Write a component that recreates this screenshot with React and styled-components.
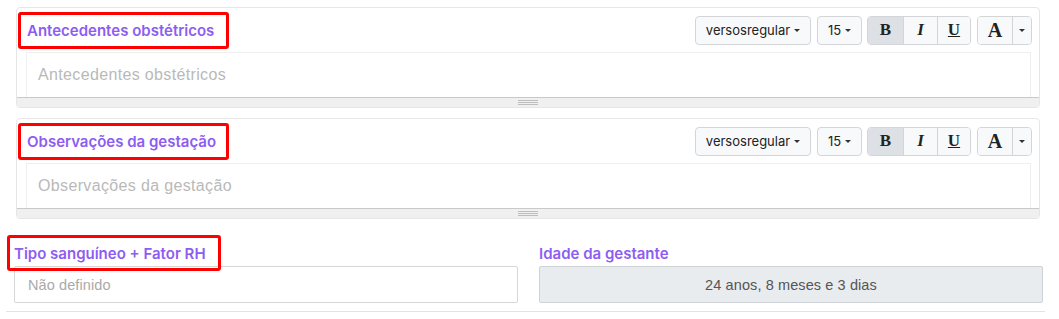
import styled, { createGlobalStyle } from 'styled-components';

const GlobalStyle = createGlobalStyle`
  body {
    margin: 0;
    background: #fff;
    font-family: Inter, "Liberation Sans", Arial, sans-serif;
  }
`;

function Editor({ label }) {
  return (
    <EditorBox>
      <Toolbar>
        <Highlight $on $w={211} $h={37} $pl={6}>
          <Label>{label}</Label>
        </Highlight>
        <Tools>
          <ToolButton $w={116}>
            versosregular <Caret />
          </ToolButton>
          <ToolButton $w={45}>
            15 <Caret />
          </ToolButton>
          <Group>
            <Segment $w={35} $active>
              <Glyph>B</Glyph>
            </Segment>
            <Segment $w={34}>
              <Glyph $italic>I</Glyph>
            </Segment>
            <Segment $w={33}>
              <Glyph $underline>U</Glyph>
            </Segment>
          </Group>
          <Group>
            <Segment $w={34}>
              <Glyph $big>A</Glyph>
            </Segment>
            <Segment $w={19}>
              <Caret />
            </Segment>
          </Group>
        </Tools>
      </Toolbar>
      <Content>
        <Placeholder>{label}</Placeholder>
      </Content>
      <StatusBar>
        <Grip />
      </StatusBar>
    </EditorBox>
  );
}

export default function App() {
  return (
    <>
      <GlobalStyle />
      <Page>
        <Editor label="Antecedentes obstétricos" />
        <Editor label="Observações da gestação" />
        <FieldsRow>
          <Field>
            <Highlight $on $w={214} $h={36} $pl={4} $pull>
              <Label>Tipo sanguíneo + Fator RH</Label>
            </Highlight>
            <Input>Não definido</Input>
          </Field>
          <Field>
            <Highlight $w={214} $h={36} $pl={4} $pull>
              <Label>Idade da gestante</Label>
            </Highlight>
            <Input $readonly>24 anos, 8 meses e 3 dias</Input>
          </Field>
        </FieldsRow>
      </Page>
    </>
  );
}

const Page = styled.div`
  display: flex;
  flex-direction: column;
  gap: 10px;
  padding-top: 7px;
`;

const EditorBox = styled.div`
  display: flex;
  flex-direction: column;
  margin: 0 19px 0 16px;
  border: 1px solid #e6e6e6;
  border-radius: 4px;
  overflow: hidden;
`;

const Toolbar = styled.div`
  display: flex;
  align-items: center;
  justify-content: space-between;
  height: 44px;
  padding: 0 7px 0 1px;
`;

const Highlight = styled.div`
  display: flex;
  align-items: center;
  box-sizing: border-box;
  width: ${p => p.$w}px;
  height: ${p => p.$h}px;
  padding-left: ${p => p.$pl}px;
  border: 3px solid ${p => (p.$on ? '#ff0000' : 'transparent')};
  border-radius: 3px;
  position: relative;
  z-index: 1;
  ${p => p.$pull && 'margin: 0 0 -5px -7px;'}
`;

const Label = styled.span`
  font-size: 15px;
  font-weight: 600;
  color: #8d5df2;
  white-space: nowrap;
`;

const Tools = styled.div`
  display: flex;
  align-items: center;
  gap: 6px;
  & > :nth-child(3) {
    margin-left: -1px;
  }
`;

const ToolButton = styled.div`
  display: flex;
  align-items: center;
  justify-content: center;
  gap: 4px;
  box-sizing: border-box;
  width: ${p => p.$w}px;
  height: 29px;
  border: 1px solid #d3d5d8;
  border-radius: 4px;
  background: #f8f9fa;
  font-size: 13px;
  color: #222;
`;

const Caret = styled.span`
  display: inline-block;
  width: 0;
  height: 0;
  border-left: 3px solid transparent;
  border-right: 3px solid transparent;
  border-top: 3px solid #333;
`;

const Group = styled.div`
  display: flex;
  height: 29px;
  border: 1px solid #d3d5d8;
  border-radius: 4px;
  overflow: hidden;
  box-sizing: border-box;
`;

const Segment = styled.div`
  display: flex;
  align-items: center;
  justify-content: center;
  box-sizing: border-box;
  width: ${p => p.$w}px;
  background: ${p => (p.$active ? '#dde1e6' : '#f8f9fa')};
  & + & {
    border-left: 1px solid #d3d5d8;
  }
`;

const Glyph = styled.span`
  font-family: "Liberation Serif", "Times New Roman", serif;
  font-weight: 700;
  font-size: ${p => (p.$big ? 20 : 17)}px;
  color: #222;
  font-style: ${p => (p.$italic ? 'italic' : 'normal')};
  text-decoration: ${p => (p.$underline ? 'underline' : 'none')};
`;

const Content = styled.div`
  display: flex;
  align-items: center;
  box-sizing: border-box;
  height: 45px;
  margin: 0 8px 0 9px;
  padding-left: 11px;
  border: 1px solid #efefef;
  border-bottom: none;
`;

const Placeholder = styled.span`
  font-family: "Liberation Sans", Arial, sans-serif;
  font-size: 16px;
  letter-spacing: 0.35px;
  color: #b9b9b9;
`;

const StatusBar = styled.div`
  display: flex;
  align-items: center;
  justify-content: center;
  height: 9px;
  background: #f0f0f0;
  border-top: 1px solid #c9c9c9;
`;

const Grip = styled.div`
  width: 20px;
  height: 5px;
  background: repeating-linear-gradient(
    to bottom,
    #bdbdbd 0 1px,
    transparent 1px 2px
  );
`;

const FieldsRow = styled.div`
  display: grid;
  grid-template-columns: 1fr 1fr;
  gap: 21px;
  margin: 6px 14px 0 6px;
  padding: 0 2px 8px 8px;
  border-bottom: 1px solid #e3e3e3;
`;

const Field = styled.div`
  display: flex;
  flex-direction: column;
`;

const Input = styled.div`
  display: flex;
  align-items: center;
  justify-content: ${p => (p.$readonly ? 'center' : 'flex-start')};
  box-sizing: border-box;
  height: 37px;
  padding-left: ${p => (p.$readonly ? 0 : 13)}px;
  border: 1px solid ${p => (p.$readonly ? '#cfd2d6' : '#d6d6d6')};
  border-radius: 2px;
  background: ${p => (p.$readonly ? '#e9ecef' : '#fff')};
  font-family: "Liberation Sans", Arial, sans-serif;
  font-size: 14.5px;
  letter-spacing: 0.1px;
  color: ${p => (p.$readonly ? '#555' : '#aaa')};
`;
